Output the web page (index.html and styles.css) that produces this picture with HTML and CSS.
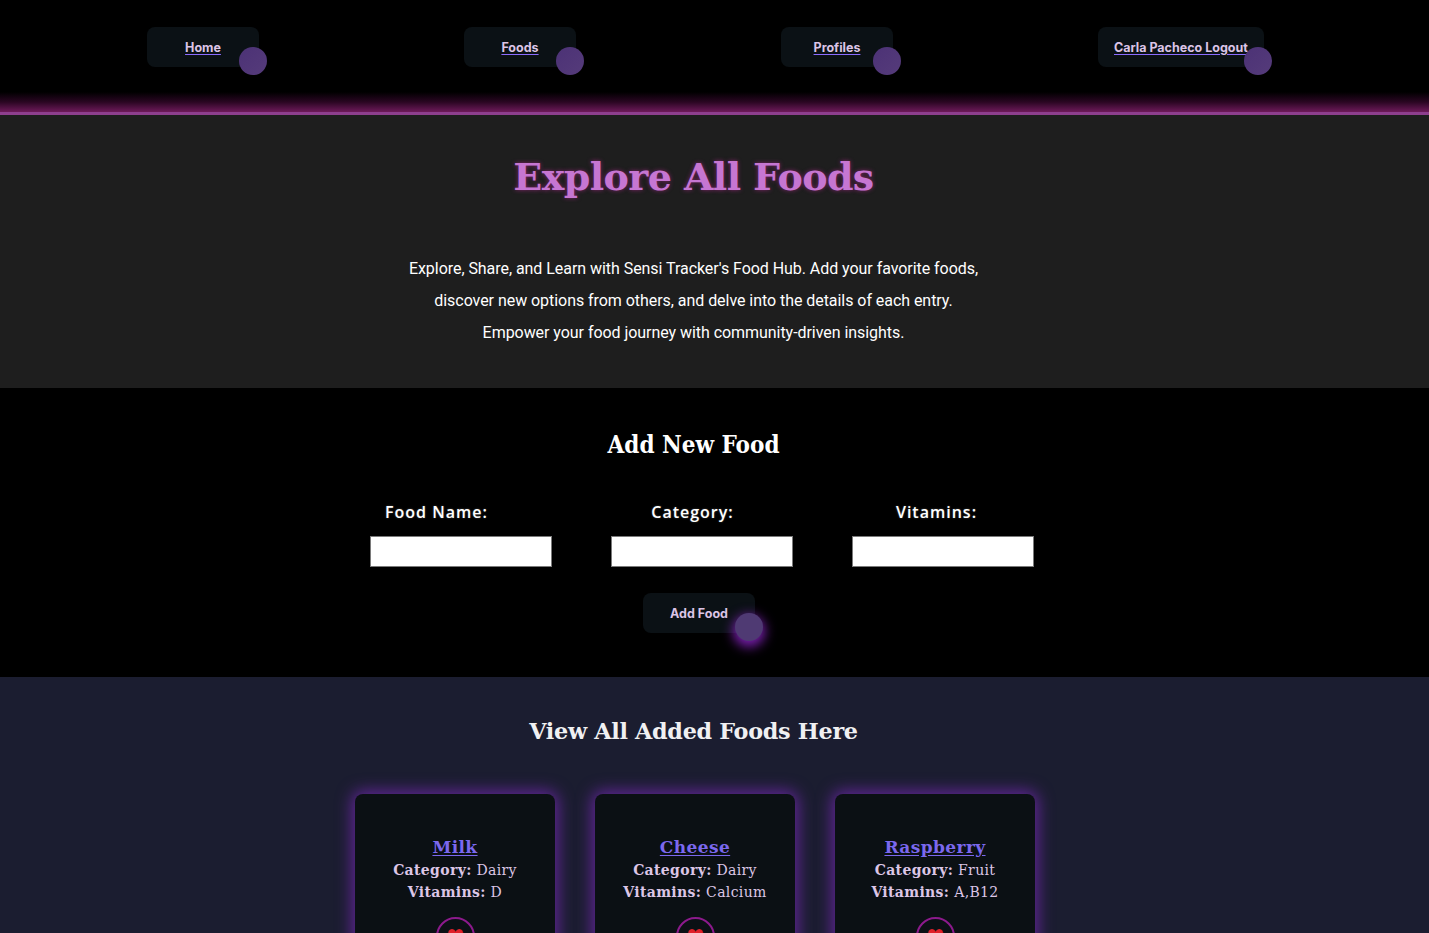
FILE: index.html
```html
<!DOCTYPE html>
<html lang="en">
<head>
<meta charset="utf-8">
<title>Explore All Foods</title>
<link rel="stylesheet" href="styles.css">
</head>
<body>
<nav class="topnav">
  <a class="navbtn" href="#"><span class="navtext">Home</span><span class="dot"></span></a>
  <a class="navbtn" href="#"><span class="navtext">Foods</span><span class="dot"></span></a>
  <a class="navbtn" href="#"><span class="navtext">Profiles</span><span class="dot"></span></a>
  <a class="navbtn" href="#"><span class="navtext">Carla Pacheco Logout</span><span class="dot"></span></a>
</nav>

<section class="hero">
  <h1 class="hero-title">Explore All Foods</h1>
  <p class="hero-text">Explore, Share, and Learn with Sensi Tracker's Food Hub. Add your favorite foods,<br>discover new options from others, and delve into the details of each entry.<br>Empower your food journey with community-driven insights.</p>
</section>

<section class="add">
  <h2 class="add-title">Add New Food</h2>
  <form class="add-form">
    <div class="fields">
      <div class="field field-name"><label class="lbl">Food Name:</label><input class="inp" type="text"></div>
      <div class="field field-cat"><label class="lbl">Category:</label><input class="inp" type="text"></div>
      <div class="field field-vit"><label class="lbl">Vitamins:</label><input class="inp" type="text"></div>
    </div>
    <button class="navbtn addbtn" type="button"><span class="navtext plain">Add Food</span><span class="dot glow"></span></button>
  </form>
</section>

<section class="list">
  <h2 class="list-title">View All Added Foods Here</h2>
  <div class="cards">
    <div class="card">
      <a class="card-title" href="#">Milk</a>
      <div class="card-line"><b>Category:</b> Dairy</div>
      <div class="card-line"><b>Vitamins:</b> D</div>
      <div class="like"><span class="heart">&#10084;</span></div>
    </div>
    <div class="card">
      <a class="card-title" href="#">Cheese</a>
      <div class="card-line"><b>Category:</b> Dairy</div>
      <div class="card-line"><b>Vitamins:</b> Calcium</div>
      <div class="like"><span class="heart">&#10084;</span></div>
    </div>
    <div class="card">
      <a class="card-title" href="#">Raspberry</a>
      <div class="card-line"><b>Category:</b> Fruit</div>
      <div class="card-line"><b>Vitamins:</b> A,B12</div>
      <div class="like"><span class="heart">&#10084;</span></div>
    </div>
  </div>
</section>
</body>
</html>
```

FILE: styles.css
```css
* { box-sizing: border-box; }
html, body { margin: 0; padding: 0; }
body {
  background: #1b1d30;
  font-family: Roboto, "Liberation Sans", sans-serif;
  color: #fff;
  overflow: hidden;
}

.topnav {
  height: 115px;
  background: linear-gradient(to bottom, #000 0, #000 92px, #2a0622 102px, #6e1a5a 112px);
  border-bottom: 3px solid #8e3f8e;
  display: flex;
  align-items: flex-start;
  padding: 27px 0 0 147px;
  gap: 205px;
}

.navbtn {
  position: relative;
  display: inline-flex;
  align-items: center;
  justify-content: center;
  min-width: 112px;
  height: 40px;
  padding: 0 16px;
  background: #0b1115;
  border: none;
  border-radius: 8px;
  text-decoration: none;
  cursor: pointer;
}
.navtext {
  font-family: Inter, Roboto, sans-serif;
  font-size: 12.5px;
  font-weight: 700;
  color: #dcc4e6;
  text-decoration: underline;
  text-decoration-color: #8c6cff;
  text-underline-offset: 2px;
  text-decoration-thickness: 1px;
}
.navtext.plain { text-decoration: none; }
.dot {
  position: absolute;
  right: -8px;
  bottom: -8px;
  width: 28px;
  height: 28px;
  border-radius: 50%;
  background: linear-gradient(135deg, #4c3276, #553b7a);
}
.dot.glow {
  background: #4f3a73;
  box-shadow: 0 4px 12px 2px rgba(160, 40, 230, 0.75);
}

.hero {
  background: #1e1e1e;
  height: 273px;
  padding: 38px 42px 0 0;
  text-align: center;
}
.hero-title {
  margin: 0;
  font-family: "DejaVu Serif", "Liberation Serif", serif;
  font-weight: 700;
  font-size: 38px;
  line-height: 48px;
  letter-spacing: -0.6px;
  color: #c676d2;
  text-shadow: 0 0 4px rgba(200, 40, 160, 0.6);
}
.hero-text {
  margin: 52px 0 0;
  font-size: 16px;
  line-height: 32px;
  letter-spacing: -0.05px;
  color: #fff;
}

.add {
  background: #000;
  height: 289px;
  padding: 40px 42px 0 0;
  text-align: center;
}
.add-title {
  margin: 0;
  font-family: "DejaVu Serif Condensed", "DejaVu Serif", serif;
  font-stretch: condensed;
  font-weight: 700;
  font-size: 24px;
  line-height: 34px;
  color: #fff;
}
.add-form {
  display: flex;
  flex-direction: column;
  align-items: center;
  margin-top: 39px;
}
.fields {
  display: flex;
  gap: 59px;
  margin-left: 16px;
}
.field {
  display: flex;
  flex-direction: column;
  align-items: center;
  width: 182px;
}
.lbl {
  font-family: "Open Sans", sans-serif;
  font-weight: 600;
  font-size: 16px;
  letter-spacing: 1px;
  line-height: 22px;
  color: #fff;
  text-shadow: 0 0 2px rgba(255,255,255,0.3);
}
.field-name .lbl { margin-right: 48px; }
.field-cat .lbl { margin-right: 18px; }
.field-vit .lbl { margin-right: 12px; }
.inp {
  margin-top: 13px;
  width: 182px;
  height: 31px;
  border: 1px solid #7a7a7a;
  background: #fff;
}
.addbtn {
  margin-top: 26px;
  margin-left: 11px;
}

.list {
  padding: 41px 42px 0 0;
  text-align: center;
}
.list-title {
  margin: 0;
  font-family: "DejaVu Serif", serif;
  font-weight: 700;
  font-size: 22.3px;
  line-height: 26px;
  letter-spacing: -0.3px;
  color: #f0f0f2;
}
.cards {
  display: flex;
  justify-content: center;
  gap: 40px;
  margin-top: 50px;
  margin-left: 3px;
}
.card {
  width: 200px;
  height: 220px;
  background: #0b1014;
  border-radius: 8px;
  box-shadow: 0 0 16px 3px rgba(110, 40, 170, 0.85);
  padding-top: 41px;
  display: flex;
  flex-direction: column;
  align-items: center;
}
.card-title {
  font-family: "DejaVu Serif", serif;
  font-weight: 700;
  font-size: 17px;
  line-height: 24px;
  letter-spacing: 0.4px;
  color: #7b68ee;
  text-decoration: underline;
  text-underline-offset: 2px;
}
.card-line {
  font-family: "DejaVu Serif", serif;
  font-size: 14px;
  line-height: 22px;
  letter-spacing: 0.35px;
  color: #dcc6e6;
}
.card-line b { font-weight: 700; }
.like {
  margin-top: 14px;
  width: 39px;
  height: 39px;
  border-radius: 50%;
  border: 2px solid #8c1a8c;
  display: flex;
  align-items: flex-start;
  justify-content: center;
}
.heart {
  color: #e0202a;
  font-size: 20px;
  line-height: 1;
  margin-top: 6px;
}
```
